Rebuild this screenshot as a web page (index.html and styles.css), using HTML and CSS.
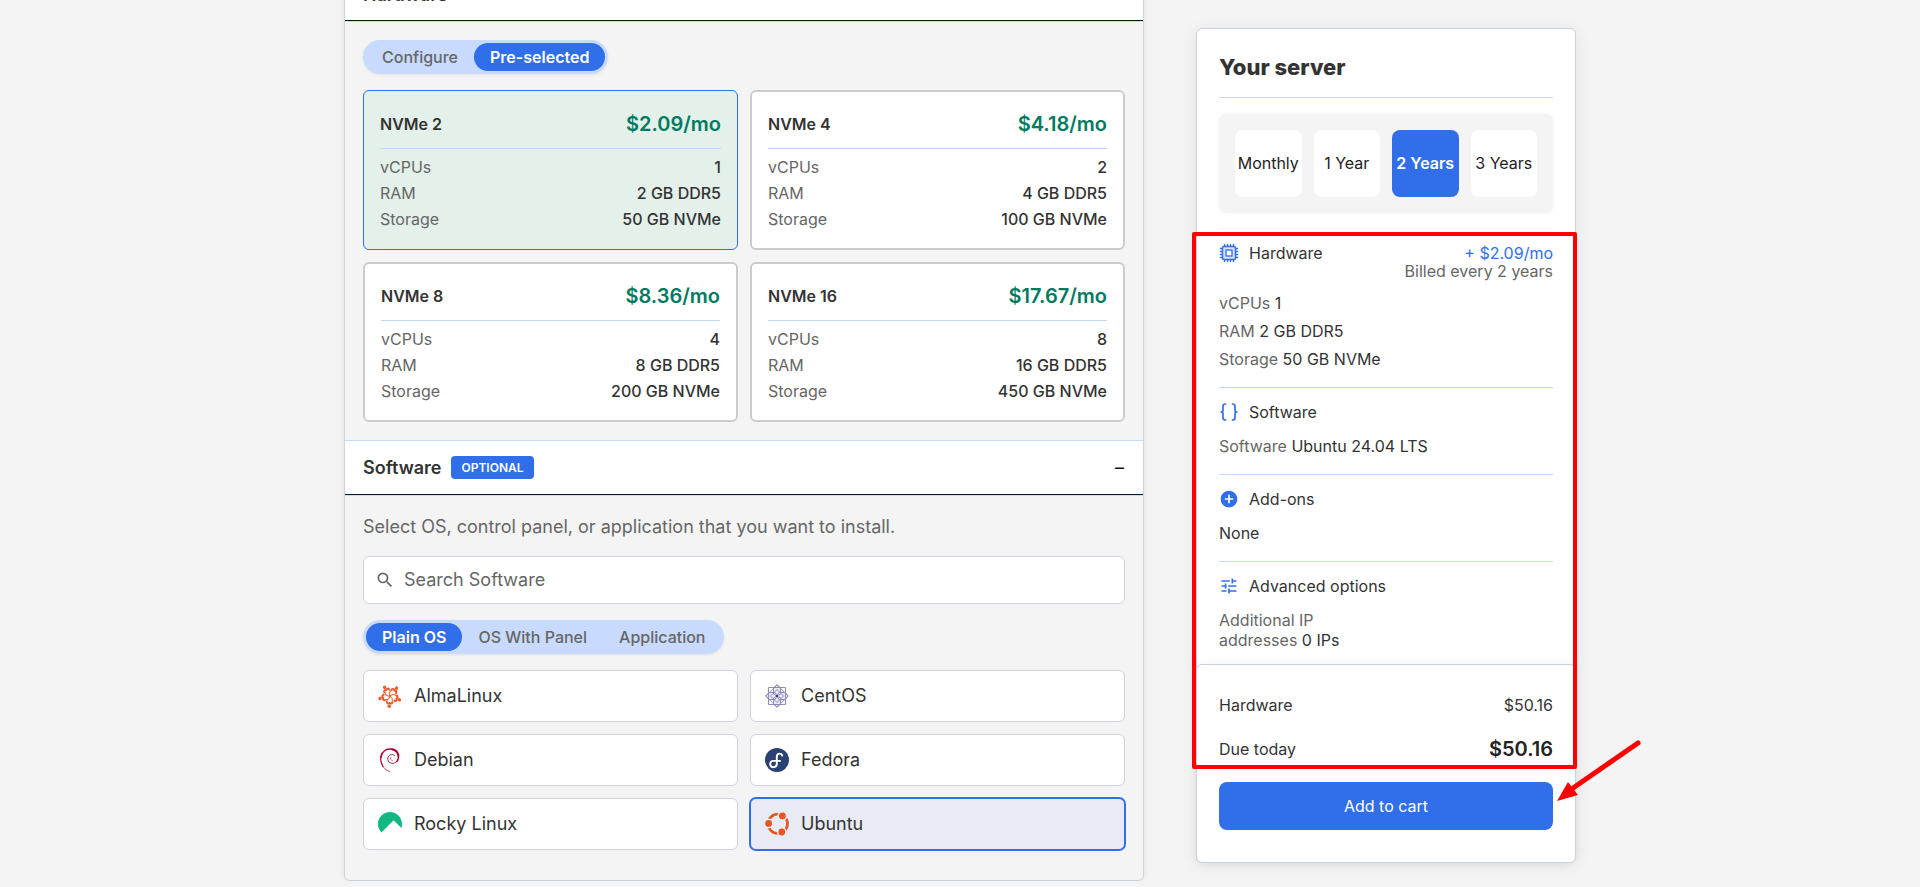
FILE: index.html
```html
<!DOCTYPE html>
<html lang="en">
<head>
<meta charset="utf-8">
<meta name="viewport" content="width=device-width, initial-scale=1">
<title>Configure your server</title>
<link rel="stylesheet" href="styles.css">
</head>
<body>
<div class="page">
  <main class="config">
    <section>
      <header class="section-head section-head-first">
        <h2 class="section-title">Hardware</h2>
      </header>
      <div class="section-body">
        <div class="toggle">
          <button class="toggle-item" type="button">Configure</button>
          <button class="toggle-item is-active" type="button" aria-pressed="true">Pre-selected</button>
        </div>
        <div class="grid">
          <button class="plan is-selected" type="button" aria-pressed="true">
            <span class="plan-head"><span class="plan-name">NVMe 2</span><span class="plan-price">$2.09/mo</span></span>
            <span class="plan-row"><span class="muted">vCPUs</span><span class="value">1</span></span>
            <span class="plan-row"><span class="muted">RAM</span><span class="value">2 GB DDR5</span></span>
            <span class="plan-row"><span class="muted">Storage</span><span class="value">50 GB NVMe</span></span>
          </button>
          <button class="plan" type="button">
            <span class="plan-head"><span class="plan-name">NVMe 4</span><span class="plan-price">$4.18/mo</span></span>
            <span class="plan-row"><span class="muted">vCPUs</span><span class="value">2</span></span>
            <span class="plan-row"><span class="muted">RAM</span><span class="value">4 GB DDR5</span></span>
            <span class="plan-row"><span class="muted">Storage</span><span class="value">100 GB NVMe</span></span>
          </button>
          <button class="plan" type="button">
            <span class="plan-head"><span class="plan-name">NVMe 8</span><span class="plan-price">$8.36/mo</span></span>
            <span class="plan-row"><span class="muted">vCPUs</span><span class="value">4</span></span>
            <span class="plan-row"><span class="muted">RAM</span><span class="value">8 GB DDR5</span></span>
            <span class="plan-row"><span class="muted">Storage</span><span class="value">200 GB NVMe</span></span>
          </button>
          <button class="plan" type="button">
            <span class="plan-head"><span class="plan-name">NVMe 16</span><span class="plan-price">$17.67/mo</span></span>
            <span class="plan-row"><span class="muted">vCPUs</span><span class="value">8</span></span>
            <span class="plan-row"><span class="muted">RAM</span><span class="value">16 GB DDR5</span></span>
            <span class="plan-row"><span class="muted">Storage</span><span class="value">450 GB NVMe</span></span>
          </button>
        </div>
      </div>
    </section>

    <section>
      <header class="section-head">
        <h2 class="section-title">Software</h2>
        <span class="badge">OPTIONAL</span>
        <button class="collapse" type="button" aria-label="Collapse software">–</button>
      </header>
      <div class="section-body section-body-last">
        <p class="intro">Select OS, control panel, or application that you want to install.</p>
        <label class="search">
          <svg class="icon" viewBox="0 0 24 24" aria-hidden="true"><path fill="#666" d="M15.5 14h-.79l-.28-.27A6.47 6.47 0 0 0 16 9.5 6.5 6.5 0 1 0 9.500 16c1.610 0 3.090-.590 4.230-1.570l.27.28v.79l5 4.990L20.490 19l-4.990-5zm-6 0C7.010 14 5 11.990 5 9.500S7.010 5 9.500 5 14 7.010 14 9.500 11.990 14 9.500 14z"/></svg>
          <input class="search-input" type="search" placeholder="Search Software" aria-label="Search Software">
        </label>
        <div class="toggle">
          <button class="toggle-item is-active" type="button" aria-pressed="true">Plain OS</button>
          <button class="toggle-item" type="button">OS With Panel</button>
          <button class="toggle-item" type="button">Application</button>
        </div>
        <div class="grid">
          <button class="os" type="button">
            <svg class="os-logo" viewBox="0 0 24 24" aria-hidden="true">
              <defs>
                <g id="alma-arm">
                  <circle cx="11.300" cy="22.200" r="1.700" fill="#f1592a"/>
                  <path d="M8.800 17.600c0 2 1.600 2.600 2.700 1.300 1 1.200 2.600.9 3-.5" fill="none" stroke="#f1592a" stroke-width="2" stroke-linecap="round" stroke-linejoin="round"/>
                  <path d="M12 12.300c2.200.9 3 3.300 1.900 6" fill="none" stroke="#f1592a" stroke-width="1" stroke-linecap="round"/>
                </g>
              </defs>
              <use href="#alma-arm"/>
              <use href="#alma-arm" transform="rotate(72 12 12)"/>
              <use href="#alma-arm" transform="rotate(144 12 12)"/>
              <use href="#alma-arm" transform="rotate(216 12 12)"/>
              <use href="#alma-arm" transform="rotate(288 12 12)"/>
            </svg>
            <span>AlmaLinux</span>
          </button>
          <button class="os" type="button">
            <svg class="os-logo" viewBox="0 0 24 24" aria-hidden="true">
              <g fill="none" stroke="#8682b8" stroke-width=".9">
                <path fill="#e9e8f3" d="M12 .8 15.500 4v6L12 12l-3.500-2V4zM12 23.200 15.500 20v-6L12 12l-3.500 2v6zM.8 12 4 8.500h6L12 12l-2 3.500H4zM23.200 12 20 8.500h-6L12 12l2 3.500h6z"/>
                <path d="M3.500 3.500h17v17h-17zM12 .8 23.200 12 12 23.200.8 12zM12 5.500l6.500 6.500-6.500 6.500L5.500 12z"/>
              </g>
              <circle cx="12" cy="12" r="1.200" fill="#3f3a8c"/>
            </svg>
            <span>CentOS</span>
          </button>
          <button class="os" type="button">
            <svg class="os-logo" viewBox="0 0 24 24" aria-hidden="true">
              <g fill="none" stroke="#a80030" stroke-linecap="round" stroke-linejoin="round">
                <path stroke-width=".7" d="M11.800 23.500C8 22.800 5 19.500 3.700 16"/>
                <path stroke-width="1.200" d="M5 18.500C2.500 14 2 8.500 4.300 4.800"/>
                <path stroke-width="1.500" d="M3 9.500C3.600 4 7.500 1 12 1c2.600 0 5 .8 6.600 2.300"/>
                <path stroke-width="2" d="M14 1.200c3.500.5 6.300 3.300 6.300 6.600"/>
                <path stroke-width="1.300" d="M20.500 7c.3 2.800-.3 5-1.800 6.600"/>
                <path stroke-width=".9" d="M19.500 12.600c-2.200 3.600-7.600 3.700-9.200.4-1.400-3 .3-6.200 3.200-6.400 1.300-.1 2.200.2 3 .9"/>
                <path stroke-width=".5" d="M14.500 12.600c-2-.2-2.600-2-1.600-3.400"/>
              </g>
            </svg>
            <span>Debian</span>
          </button>
          <button class="os" type="button">
            <svg class="os-logo" viewBox="0 0 24 24" aria-hidden="true">
              <circle cx="12" cy="12" r="12" fill="#294172"/>
              <path fill="none" stroke="#fff" stroke-width="1.900" stroke-linecap="round" d="M17.200 7.600c-.2-2.700-5.200-2.800-5.400 1v7.200c0 2-1.500 3.400-3.400 3.400s-3.200-1.400-3.200-3.200 1.400-3.100 3.300-3.100h6.600"/>
            </svg>
            <span>Fedora</span>
          </button>
          <button class="os" type="button">
            <svg class="os-logo" viewBox="0 0 24 24" aria-hidden="true"><path fill="#10b981" d="M23.332 15.957c.433-1.239.668-2.570.668-3.957 0-6.627-5.373-12-12-12S0 5.373 0 12c0 3.280 1.315 6.251 3.447 8.417L15.620 8.245z"/></svg>
            <span>Rocky Linux</span>
          </button>
          <button class="os is-selected" type="button" aria-pressed="true">
            <svg class="os-logo" viewBox="0 0 24 24" aria-hidden="true">
              <circle cx="12.800" cy="11.800" r="9.700" fill="none" stroke="#e95420" stroke-width="2.700"/>
              <g fill="#e95420" stroke="#e8ebf3" stroke-width="1.600">
                <circle cx="3.600" cy="11.400" r="4.200"/>
                <circle cx="17.400" cy="3.900" r="4.200"/>
                <circle cx="16.800" cy="20" r="4.200"/>
              </g>
            </svg>
            <span>Ubuntu</span>
          </button>
        </div>
      </div>
    </section>
  </main>

  <aside class="summary">
    <div class="summary-body">
      <h2 class="summary-title">Your server</h2>
      <div class="terms">
        <button class="term" type="button">Monthly</button>
        <button class="term" type="button">1 Year</button>
        <button class="term is-active" type="button" aria-pressed="true">2 Years</button>
        <button class="term" type="button">3 Years</button>
      </div>

      <section class="item item-first">
        <div class="item-head">
          <svg class="icon" viewBox="0 0 20 20" aria-hidden="true">
            <path stroke="#316eea" stroke-width="1.400" stroke-linecap="round" d="M5.500 1.500v2M8.500 1.500v2M11.500 1.500v2M14.500 1.500v2M5.500 16.500v2M8.500 16.500v2M11.500 16.500v2M14.500 16.500v2M1.500 5.500h2M1.500 8.500h2M1.500 11.500h2M1.500 14.500h2M16.500 5.500h2M16.500 8.500h2M16.500 11.500h2M16.500 14.500h2"/>
            <rect x="3.500" y="3.500" width="13" height="13" rx="1.500" fill="#d6e3fc" stroke="#316eea" stroke-width="1.500"/>
            <rect x="7" y="7" width="6" height="6" fill="#fff" stroke="#316eea" stroke-width="1.300"/>
          </svg>
          <h3 class="item-title">Hardware</h3>
          <div class="item-price"><span class="price">+ $2.09/mo</span><span class="muted">Billed every 2 years</span></div>
        </div>
        <ul class="specs">
          <li><span class="muted">vCPUs</span> <span class="value">1</span></li>
          <li><span class="muted">RAM</span> <span class="value">2 GB DDR5</span></li>
          <li><span class="muted">Storage</span> <span class="value">50 GB NVMe</span></li>
        </ul>
      </section>

      <section class="item">
        <div class="item-head">
          <svg class="icon" viewBox="0 0 20 20" aria-hidden="true"><path fill="none" stroke="#316eea" stroke-width="1.700" stroke-linecap="round" stroke-linejoin="round" d="M6.500 2C4.700 2 4 2.800 4 4.300V8c0 1.200-.5 2-1.800 2 1.300 0 1.800.8 1.800 2v3.700C4 17.200 4.700 18 6.500 18M13.500 2c1.800 0 2.500.8 2.500 2.300V8c0 1.200.5 2 1.800 2-1.300 0-1.800.8-1.800 2v3.700c0 1.500-.7 2.300-2.500 2.300"/></svg>
          <h3 class="item-title">Software</h3>
        </div>
        <ul class="specs">
          <li><span class="muted">Software</span> <span class="value">Ubuntu 24.04 LTS</span></li>
        </ul>
      </section>

      <section class="item">
        <div class="item-head">
          <svg class="icon" viewBox="0 0 24 24" aria-hidden="true"><path fill="#316eea" d="M12 2C6.480 2 2 6.480 2 12s4.480 10 10 10 10-4.480 10-10S17.520 2 12 2zm5 11h-4v4h-2v-4H7v-2h4V7h2v4h4v2z"/></svg>
          <h3 class="item-title">Add-ons</h3>
        </div>
        <ul class="specs">
          <li><span class="value">None</span></li>
        </ul>
      </section>

      <section class="item item-last">
        <div class="item-head">
          <svg class="icon" viewBox="0 0 24 24" aria-hidden="true"><path fill="#316eea" d="M3 17v2h6v-2H3zM3 5v2h10V5H3zm10 16v-2h8v-2h-8v-2h-2v6h2zM7 9v2H3v2h4v2h2V9H7zm14 4v-2H11v2h10zm-6-4h2V7h4V5h-4V3h-2v6z"/></svg>
          <h3 class="item-title">Advanced options</h3>
        </div>
        <ul class="specs specs-narrow">
          <li><span class="muted">Additional IP addresses</span> <span class="value">0 IPs</span></li>
        </ul>
      </section>
    </div>

    <footer class="checkout">
      <div class="total"><span>Hardware</span><span>$50.16</span></div>
      <div class="total total-due"><span>Due today</span><strong class="due">$50.16</strong></div>
      <button class="cart" type="button">Add to cart</button>
    </footer>

    <div class="highlight" aria-hidden="true"></div>
    <svg class="arrow" viewBox="0 0 90 68" aria-hidden="true">
      <path d="M81 8 16 53" stroke="#f00" stroke-width="5" stroke-linecap="round"/>
      <path d="M0 66 11 47 21 60z" fill="#f00"/>
    </svg>
  </aside>
</div>
</body>
</html>
```

FILE: styles.css
```css
* {
  box-sizing: border-box;
}

body {
  margin: 0;
  background: #f4f4f4;
  color: #333;
  font-family: Inter, "Liberation Sans", sans-serif;
  font-size: 16px;
  line-height: 20px;
  overflow: hidden;
}

h2,
h3,
p,
ul {
  margin: 0;
  padding: 0;
}

ul {
  list-style: none;
}

button {
  font: inherit;
  color: inherit;
  border: 0;
  cursor: pointer;
}

.page {
  display: flex;
  justify-content: center;
  align-items: flex-start;
  gap: 52px;
  padding: 0 24px;
}

.muted {
  color: #666;
}

.value {
  color: #333;
}

.icon {
  width: 20px;
  height: 20px;
  flex: none;
}

/* Configuration panel, scrolled part of the way past its first heading */
.config {
  flex: 0 1 800px;
  margin-top: -31px;
  border: 1px solid #ccd1de;
  border-radius: 6px;
  background: #f4f4f4;
  box-shadow: 0 1px 6px rgba(0, 0, 0, 0.08);
}

.section-head {
  display: flex;
  align-items: center;
  gap: 10px;
  height: 55px;
  padding: 0 18px;
  background: #fff;
  border-top: 1px solid #c8dbff;
  border-bottom: 1px solid #111;
  box-shadow: 0 1px 0 #c8dbff;
}

.section-head-first {
  height: 51px;
  border-top: 0;
}

.section-title {
  font-size: 18px;
  line-height: 24px;
  font-weight: 600;
}

.badge {
  padding: 0 10px;
  border-radius: 4px;
  background: #316eea;
  color: #fff;
  font-size: 12px;
  line-height: 23px;
  font-weight: 600;
}

.collapse {
  margin-left: auto;
  padding: 0 1px;
  background: none;
  color: #111;
  font-size: 18px;
}

.section-body {
  display: flex;
  flex-direction: column;
  gap: 16px;
  padding: 19px 18px 18px;
}

.section-body-last {
  padding-bottom: 30px;
}

.toggle {
  display: flex;
  align-self: flex-start;
  padding: 3px;
  border-radius: 17px;
  background: #c8dbff;
  box-shadow: 0 1px 3px rgba(0, 0, 0, 0.08);
}

.toggle-item {
  padding: 0 16px;
  border-radius: 14px;
  background: none;
  color: #666;
  font-weight: 500;
  line-height: 28px;
}

.toggle-item.is-active {
  background: #316eea;
  color: #fff;
  font-weight: 600;
}

.grid {
  display: grid;
  grid-template-columns: 1fr 1fr;
  gap: 12px;
}

.plan {
  display: flex;
  flex-direction: column;
  padding: 16px;
  border: 2px solid #ccc;
  border-radius: 6px;
  background: #fff;
  text-align: left;
}

.plan.is-selected {
  padding: 17px 16px;
  border: 1px solid #316eea;
  background: #e4f0ea;
}

.plan-head {
  display: flex;
  justify-content: space-between;
  align-items: center;
  height: 41px;
  padding-bottom: 8px;
  margin-bottom: 5px;
  border-bottom: 1px solid #c0d8fb;
}

.plan-name {
  font-weight: 600;
}

.plan-price {
  color: #007a61;
  font-size: 20px;
  font-weight: 600;
}

.plan-row {
  display: flex;
  justify-content: space-between;
  line-height: 26px;
}

.plan-row .value {
  font-weight: 500;
}

.intro {
  color: #666;
  font-size: 18px;
  line-height: 26px;
}

.search {
  display: flex;
  align-items: center;
  gap: 9px;
  height: 48px;
  padding: 0 11px;
  border: 1px solid #d0d3e2;
  border-radius: 6px;
  background: #fff;
}

.search-input {
  flex: 1;
  min-width: 0;
  padding: 0;
  border: 0;
  outline: 0;
  background: none;
  font: inherit;
  font-size: 18px;
  line-height: 24px;
}

.search-input::placeholder {
  color: #666;
}

.os {
  display: flex;
  align-items: center;
  gap: 12px;
  height: 52px;
  padding: 0 14px;
  border: 1px solid #d0d3e2;
  border-radius: 6px;
  background: #fff;
  font-size: 18px;
}

.os.is-selected {
  border-color: #316eea;
  background: #e8ebf3;
  box-shadow: 0 0 0 1px #316eea;
}

.os-logo {
  width: 24px;
  height: 24px;
  overflow: visible;
}

/* Order summary */
.summary {
  position: relative;
  flex: 0 0 380px;
  margin-top: 28px;
  border: 1px solid #ccd1de;
  border-radius: 6px;
  background: #fff;
  box-shadow: 0 2px 16px rgba(0, 0, 0, 0.08);
}

.summary-body {
  padding: 0 22px;
}

.summary-title {
  padding: 22px 0 14px;
  border-bottom: 1px solid #c8d6f5;
  font-size: 22px;
  line-height: 32px;
  font-weight: 800;
}

.terms {
  display: grid;
  grid-template-columns: repeat(4, 1fr);
  gap: 12px;
  margin: 16px 0 15px;
  padding: 16px;
  border-radius: 8px;
  background: #f4f4f4;
  box-shadow: 0 0 4px rgba(0, 0, 0, 0.05);
}

.term {
  aspect-ratio: 1;
  padding: 0;
  border-radius: 8px;
  background: #fff;
  color: #222;
  white-space: nowrap;
}

.term.is-active {
  background: #316eea;
  color: #fff;
  font-weight: 600;
}

.item {
  display: flex;
  flex-direction: column;
  gap: 14px;
  padding: 14px 0 18px;
  border-top: 1px solid #c8dbff;
}

.item-first {
  gap: 13px;
  border-top-color: #f4f4f4;
}

.item-last {
  padding-bottom: 14px;
}

.item-head {
  display: flex;
  align-items: flex-start;
  gap: 10px;
}

.item-title {
  font-size: 16px;
  font-weight: 400;
}

.item-price {
  display: flex;
  flex-direction: column;
  margin-left: auto;
  padding-top: 1px;
  text-align: right;
  line-height: 18px;
}

.price {
  color: #316eea;
}

.specs {
  display: flex;
  flex-direction: column;
  gap: 8px;
}

.specs-narrow {
  max-width: 128px;
}

.checkout {
  display: flex;
  flex-direction: column;
  margin: 0 -1px -1px;
  padding: 30px 22px 32px;
  border: 1px solid #ccd1de;
  border-radius: 6px;
  background: #fff;
  box-shadow: 0 0 8px rgba(0, 0, 0, 0.06);
}

.total {
  display: flex;
  justify-content: space-between;
  align-items: center;
}

.total-due {
  margin: 22px 0 21px;
  line-height: 24px;
}

.due {
  color: #222;
  font-size: 20px;
  font-weight: 600;
}

.cart {
  height: 48px;
  border-radius: 8px;
  background: #316eea;
  color: #fff;
}

/* Callouts drawn over the summary */
.highlight {
  position: absolute;
  top: 203px;
  right: -2px;
  bottom: 93px;
  left: -5px;
  border: 4px solid #f00;
  border-radius: 2px;
  pointer-events: none;
}

.arrow {
  position: absolute;
  right: -72px;
  bottom: 59px;
  width: 90px;
  height: 68px;
  overflow: visible;
  pointer-events: none;
}
```
